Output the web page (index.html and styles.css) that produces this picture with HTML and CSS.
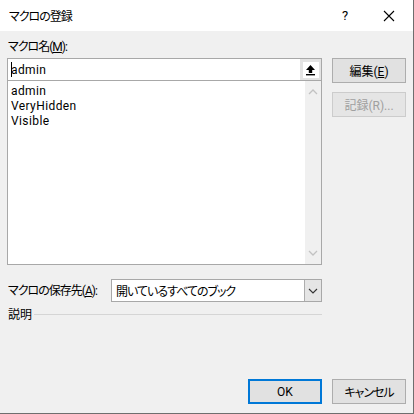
FILE: index.html
```html
<!DOCTYPE html>
<html lang="ja">
<head>
<meta charset="utf-8">
<title>マクロの登録</title>
<link rel="stylesheet" href="styles.css">
</head>
<body>
<div class="window">
  <div class="titlebar">
    <span class="title jp">マクロの登録</span>
    <span class="help">?</span>
    <span class="close"><svg width="12" height="12" viewBox="0 0 12 12"><path d="M1 1 L11 11 M11 1 L1 11" stroke="#000" stroke-width="1.1" fill="none"/></svg></span>
  </div>
  <div class="content">
    <div class="main">
      <div class="leftcol">
        <div class="label name-label jp">マクロ名(<u>M</u>):</div>
        <div class="textbox">
          <span class="caret"></span><span class="value latin">admin</span>
          <span class="refbtn"><span class="refinner"><svg width="11" height="12" viewBox="0 0 11 12"><path d="M5.5 1 L1 6 H3.8 V9 H7.2 V6 H10 Z" fill="#000"/><rect x="1" y="10" width="9" height="1.4" fill="#000"/></svg></span></span>
        </div>
        <div class="listbox">
          <div class="items latin">
            <div class="item">admin</div>
            <div class="item">VeryHidden</div>
            <div class="item">Visible</div>
          </div>
          <div class="scrollbar">
            <svg width="10" height="6" viewBox="0 0 10 6"><path d="M1 5 L5 1 L9 5" stroke="#c2c2c2" stroke-width="1.3" fill="none"/></svg>
            <svg width="10" height="6" viewBox="0 0 10 6"><path d="M1 1 L5 5 L9 1" stroke="#c2c2c2" stroke-width="1.3" fill="none"/></svg>
          </div>
        </div>
      </div>
      <div class="rightcol">
        <button class="btn">編集(<u>E</u>)</button>
        <button class="btn disabled">記録(R)...</button>
      </div>
    </div>
    <div class="store-row">
      <span class="label jp">マクロの保存先(<u>A</u>):</span>
      <div class="select">
        <span class="select-text jp">開いているすべてのブック</span>
        <span class="select-btn"><svg width="10" height="6" viewBox="0 0 10 6"><path d="M1 1 L5 5 L9 1" stroke="#333" stroke-width="1.1" fill="none"/></svg></span>
      </div>
    </div>
    <div class="desc-row">
      <span class="label">説明</span>
      <span class="rule"></span>
    </div>
    <div class="footer">
      <button class="btn default">OK</button>
      <button class="btn jp">キャンセル</button>
    </div>
  </div>
</div>
</body>
</html>
```
FILE: styles.css
```css
* { box-sizing: border-box; }
html, body { margin: 0; padding: 0; }
body {
  font-family: Roboto, "Noto Sans CJK JP", sans-serif;
  font-size: 12px;
  font-feature-settings: "palt";
  color: #000;
  background: #f0f0f0;
}
.jp { letter-spacing: -1px; }
.latin { letter-spacing: 0.4px; }
.window {
  width: 414px;
  height: 414px;
  background: #f0f0f0;
  border-right: 1px solid #6e6e6e;
  border-bottom: 1px solid #6e6e6e;
  display: flex;
  flex-direction: column;
}
.titlebar {
  height: 31px;
  background: #fff;
  display: flex;
  align-items: center;
  padding-left: 9px;
  flex: none;
}
.title { flex: 1; font-size: 12px; }
.help { width: 14px; font-size: 13px; margin-right: 31px; text-align: center; }
.close { width: 12px; height: 12px; margin-right: 18px; display: flex; }
.content {
  flex: 1;
  display: flex;
  flex-direction: column;
  padding: 8px 0 9px 7px;
}
.main { display: flex; gap: 10px; }
.leftcol { width: 315px; display: flex; flex-direction: column; }
.label { line-height: 16px; padding-left: 1px; white-space: nowrap; }
.name-label { margin-bottom: 3px; }
.textbox {
  height: 23px;
  background: #fff;
  border: 1px solid #a8a8a8;
  display: flex;
  align-items: center;
  padding-left: 3px;
}
.caret { width: 1px; height: 15px; background: #000; margin-right: -1px; }
.value { flex: 1; }
.refbtn {
  width: 21px;
  height: 21px;
  background: #e3e3e3;
  display: flex;
  align-items: center;
  justify-content: center;
}
.refinner {
  width: 16px;
  height: 16px;
  background: #fff;
  display: flex;
  align-items: center;
  justify-content: center;
}
.listbox {
  height: 184px;
  background: #fff;
  border: 1px solid #a8a8a8;
  border-top: none;
  display: flex;
}
.items { flex: 1; padding: 3px 0 0 3px; }
.item { line-height: 15px; height: 15px; }
.scrollbar {
  width: 16px;
  background: #f0f0f0;
  display: flex;
  flex-direction: column;
  justify-content: space-between;
  align-items: center;
  padding: 8px 0 8px;
}
.rightcol { display: flex; flex-direction: column; gap: 9px; padding-top: 19px; }
.btn {
  width: 74px;
  height: 25px;
  background: #e1e1e1;
  border: 1px solid #adadad;
  font-family: inherit;
  font-size: 12px;
  font-feature-settings: "palt";
  color: #000;
  padding: 0;
  margin: 0;
}
.btn.disabled { color: #a0a0a0; border-color: #cccccc; background: #e5e5e5; }
.btn.default { border: 2px solid #0078d7; }
.store-row {
  width: 315px;
  display: flex;
  align-items: center;
  margin-top: 14px;
}
.store-row .label { width: 104px; }
.select {
  flex: 1;
  height: 23px;
  background: #fff;
  border: 1px solid #a8a8a8;
  display: flex;
  align-items: center;
  padding-left: 4px;
}
.select-text { flex: 1; }
.select-btn {
  width: 17px;
  height: 21px;
  background: #e5e5e5;
  border-left: 1px solid #adadad;
  display: flex;
  align-items: center;
  justify-content: center;
}
.desc-row {
  width: 315px;
  display: flex;
  align-items: center;
  margin-top: 5px;
}
.desc-row .rule { flex: 1; height: 1px; background: #d5d5d5; margin-left: 2px; margin-top: -2px; }
.footer {
  margin-top: auto;
  width: 399px;
  display: flex;
  justify-content: flex-end;
  gap: 10px;
}
```
